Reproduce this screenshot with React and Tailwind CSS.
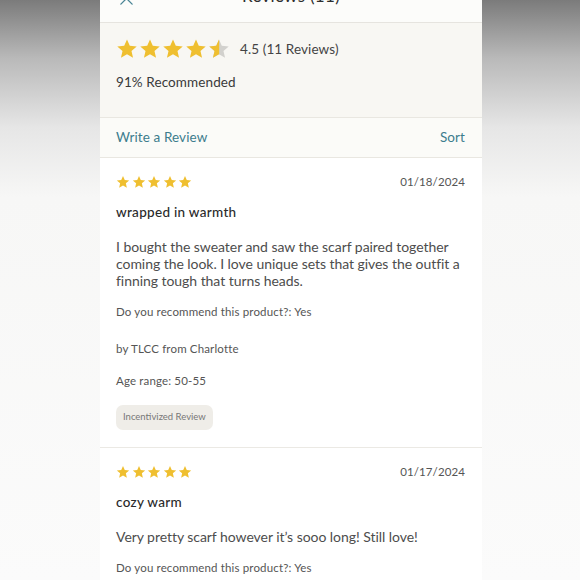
import React from 'react';

const STAR = 'M12 1.6l3.05 6.95 7.55.7-5.7 5 1.7 7.4L12 17.8l-6.6 3.85 1.7-7.4-5.7-5 7.55-.7z';

const Star = ({ size, fill = 'full' }) => (
  <svg width={size} height={size} viewBox="0 0 24 24" className="shrink-0">
    <defs>
      <clipPath id="half-left">
        <rect x="0" y="0" width="12.2" height="24" />
      </clipPath>
    </defs>
    {fill === 'half' ? (
      <>
        <path d={STAR} fill="#d2d1cd" />
        <path d={STAR} fill="#efbf30" clipPath="url(#half-left)" />
      </>
    ) : (
      <path d={STAR} fill="#efbf30" />
    )}
  </svg>
);

const Review = ({ date, title, body, author, age, incentivized }) => (
  <div className="px-4 pt-[16px] pb-[17px] border-b border-[#ebe9e4]">
    <div className="flex items-center justify-between h-[16px] pr-px">
      <div className="flex items-center gap-[1.5px]">
        {[0, 1, 2, 3, 4].map((i) => (
          <Star key={i} size={14} />
        ))}
      </div>
      <span className="text-[11.5px] text-[#555] tracking-[0.1px]">{date}</span>
    </div>
    <h3 className="mt-[13px] text-[13.5px] leading-[18px] font-medium text-[#2a2a2a] tracking-[0.3px]">{title}</h3>
    <p className="mt-[17px] text-[14px] leading-[17px] text-[#4d4d4d] tracking-[-0.05px] pr-[2px]">{body}</p>
    <p className="mt-[15px] text-[11.5px] leading-[16px] text-[#555] tracking-[0.15px]">Do you recommend this product?: Yes</p>
    {author && (
      <p className="mt-[21px] text-[11.5px] leading-[16px] text-[#555] tracking-[0.15px]">{author}</p>
    )}
    {age && (
      <p className="mt-[16px] text-[11.5px] leading-[16px] text-[#555] tracking-[0.15px]">{age}</p>
    )}
    {incentivized && (
      <span className="mt-[16px] inline-flex items-center h-[25px] px-[7px] rounded-[7px] bg-[#efede8] text-[9.5px] text-[#777]">
        Incentivized Review
      </span>
    )}
  </div>
);

export default function App() {
  return (
    <div className="w-full h-[580px] overflow-hidden bg-[linear-gradient(to_bottom,#7b7b7b_0%,#b9b9b9_10%,#e6e6e6_22%,#f7f7f6_34%,#fbfbfb_100%)] font-['Lato','Liberation_Sans',sans-serif]">
      <div className="w-[382px] h-full ml-[100px] bg-white">
        {/* Header, mostly scrolled off */}
        <div className="relative h-[23px] bg-[#fcfcfa] border-b border-[#e6e4df] overflow-hidden">
          <svg className="absolute left-[19px] -top-[9px]" width="15" height="15" viewBox="0 0 16 16" fill="none" stroke="#4a8595" strokeWidth="1.4" strokeLinecap="round">
            <path d="M2 2l12 12M14 2L2 14" />
          </svg>
          <div className="-mt-[14px] text-center text-[17px] leading-[20px] text-[#2e2e2e] tracking-[0.3px]">Reviews (11)</div>
        </div>

        {/* Summary */}
        <div className="h-[95px] bg-[#f8f7f3] border-b border-[#e9e7e1] px-4 pt-[15px]">
          <div className="flex items-center h-[22px]">
            <div className="flex items-center gap-[1px]">
              <Star size={22} />
              <Star size={22} />
              <Star size={22} />
              <Star size={22} />
              <Star size={22} fill="half" />
            </div>
            <span className="ml-[10px] text-[13.5px] text-[#444] tracking-[0.1px]">4.5 (11 Reviews)</span>
          </div>
          <p className="mt-[13px] text-[13.5px] leading-[18px] text-[#3a3a3a] tracking-[0.1px]">91% Recommended</p>
        </div>

        {/* Actions */}
        <div className="h-[40px] flex items-center justify-between pl-4 pr-[17px] bg-[#fbfbf8] border-b border-[#e9e7e1] text-[13.5px] text-[#3d7d8d] tracking-[0.1px]">
          <span>Write a Review</span>
          <span>Sort</span>
        </div>

        <Review
          date="01/18/2024"
          title="wrapped in warmth"
          body="I bought the sweater and saw the scarf paired together coming the look. I love unique sets that gives the outfit a finning tough that turns heads."
          author="by TLCC from Charlotte"
          age="Age range: 50-55"
          incentivized
        />
        <Review
          date="01/17/2024"
          title="cozy warm"
          body="Very pretty scarf however it’s sooo long! Still love!"
        />
      </div>
    </div>
  );
}
